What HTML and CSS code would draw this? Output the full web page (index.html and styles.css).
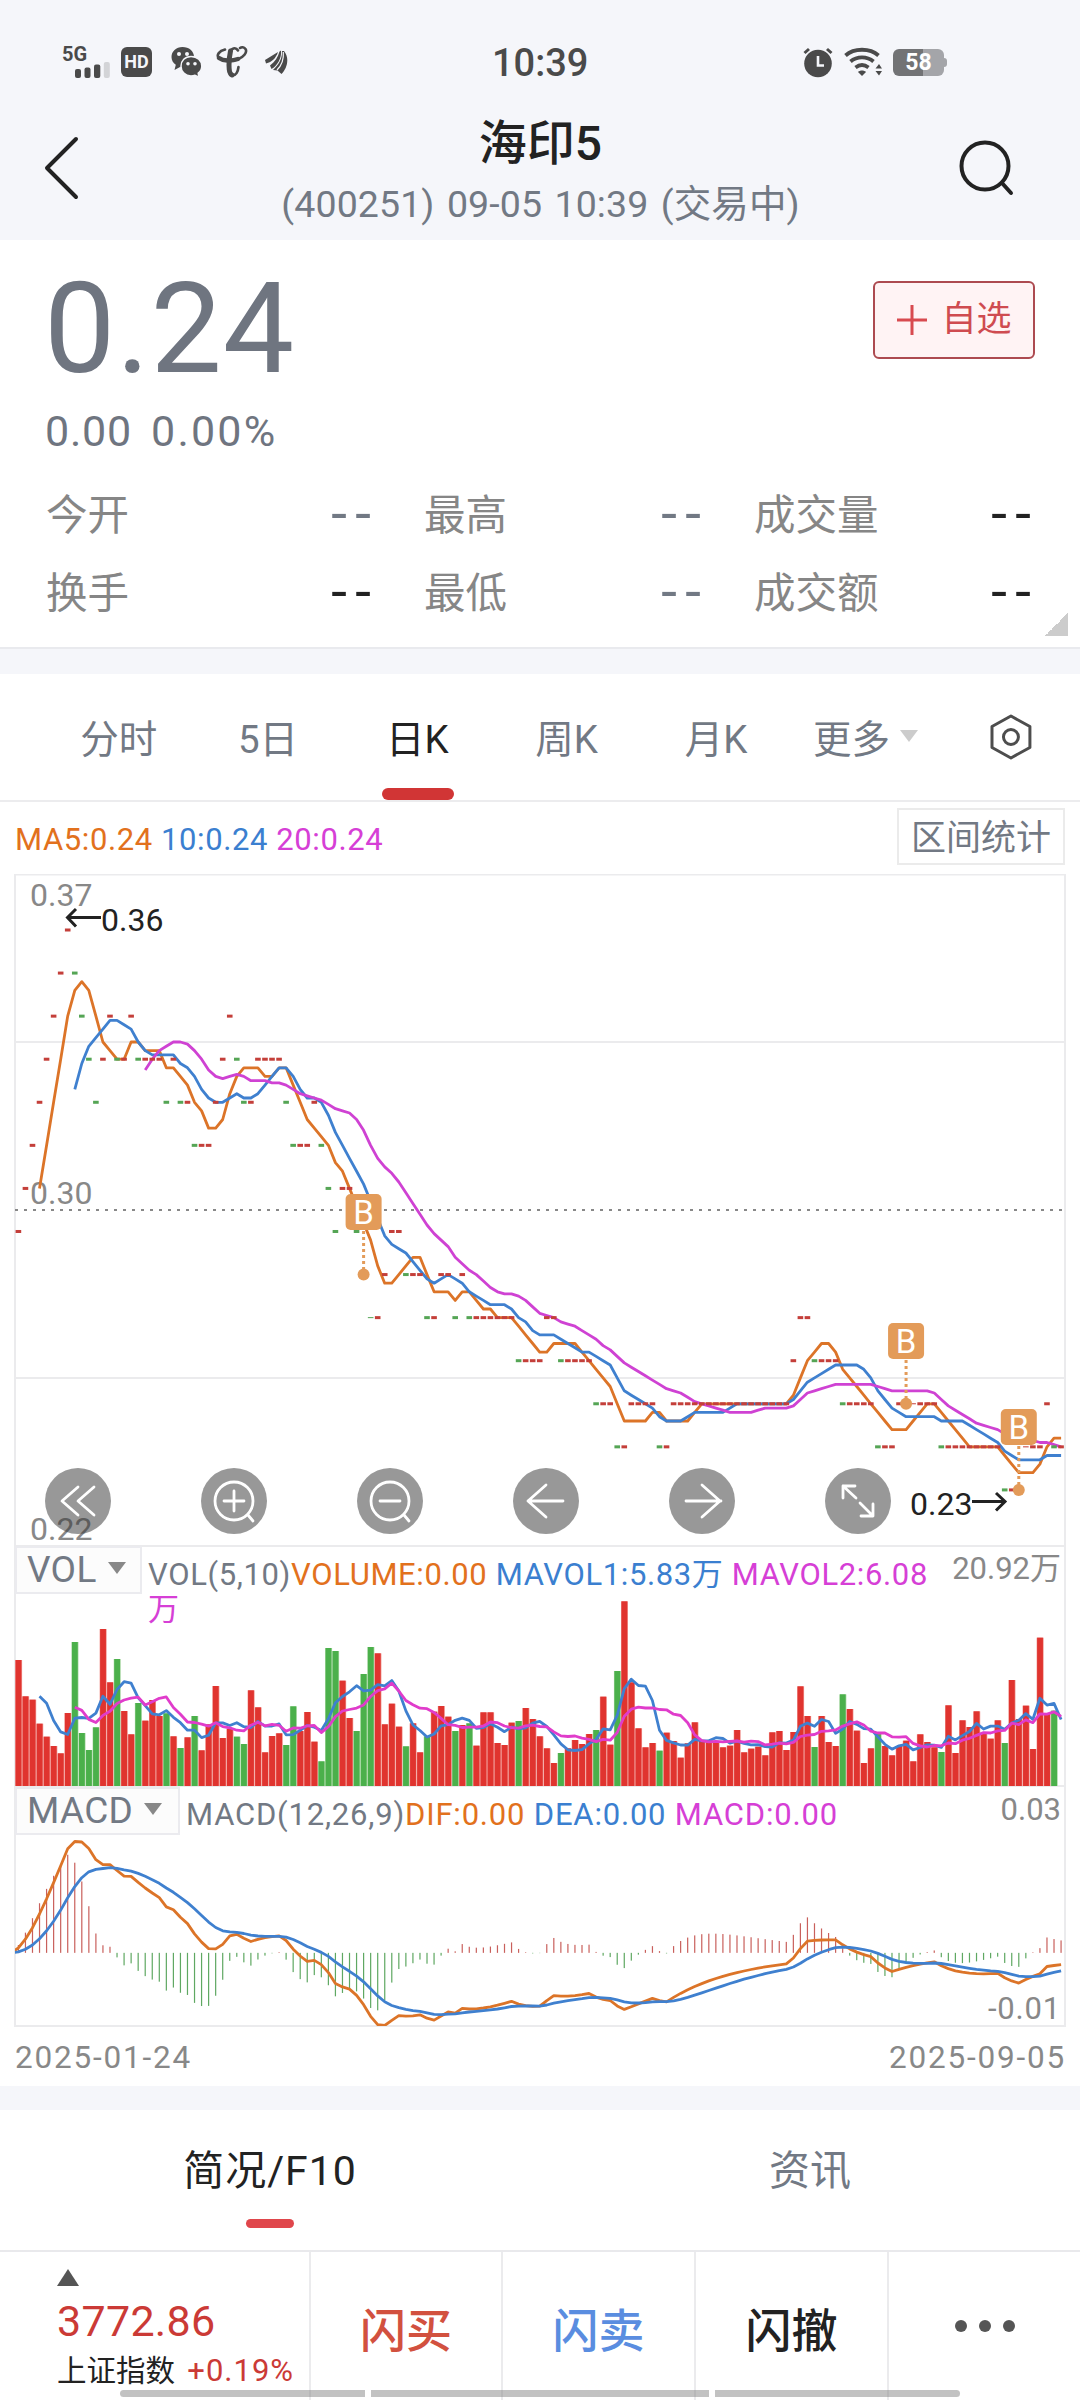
FILE: index.html
```html
<!DOCTYPE html>
<html lang="zh-CN">
<head>
    <meta charset="UTF-8">
    <title>海印5</title>
    <link rel="stylesheet" href="styles.css">
</head>
<body>
<div class="page">
    <div class="top">
        <div class="status">
            <div class="status-left">
                <svg class="signal" width="50" height="46" viewBox="61 38 50 46">
                    <text x="62" y="60" class="five-g">5G</text>
                    <g fill="#4a4a4a">
                        <rect x="75" y="68" width="6" height="9" rx="2"/>
                        <rect x="84.500" y="66.500" width="6" height="10.500" rx="2"/>
                        <rect x="94" y="63.500" width="6.300" height="13.500" rx="2"/>
                    </g>
                    <rect x="103.800" y="61" width="6" height="16" rx="2" fill="#d3d4d7"/>
                </svg>
                <span class="hd">HD</span>
                <svg class="wechat" width="32" height="32" viewBox="0 0 32 32">
                    <path d="M11.500 1C5 1 .5 5.500 .5 11c0 3.200 1.600 6 4.300 7.800L3.500 24l5.500-3c.8.2 1.700.3 2.500.3C18 21.300 23 17 23 11S18 1 11.500 1z" fill="#4a4a4a"/>
                    <circle cx="8" cy="8" r="2" fill="#f5f6fa"/><circle cx="16" cy="8" r="2" fill="#f5f6fa"/>
                    <path d="M20 10.500c-6 0-10 4.200-10 9.700s4.200 9.700 10 9.700c1.500 0 2.800-.2 4-.7l4 2-.8-4c2.200-1.700 3.600-4.200 3.600-7 0-5.500-4.500-9.700-10.800-9.700z" fill="#4a4a4a" stroke="#f5f6fa" stroke-width="1.500"/>
                    <circle cx="17" cy="17.800" r="1.800" fill="#f5f6fa"/><circle cx="24" cy="17.800" r="1.800" fill="#f5f6fa"/>
                </svg>
                <svg class="telecom" width="32" height="32" viewBox="0 0 32 32" fill="none" stroke="#4a4a4a" stroke-linecap="round">
                    <path d="M9 3.500C3 5 .5 9 2.500 11.500c3 3.500 12 4.500 19 2 6.500-2.500 10-7.500 8-10.500-1.500-2-4-2-5.500-1" stroke-width="2.600"/>
                    <path d="M3 12c4 3 12 3.500 19 1" stroke-width="4.400"/>
                    <path d="M22 4.500c-2.500-4-7-2-8 2-1.500 7-3.500 22 2 23 4 .5 6-4 6.500-8.500" stroke-width="2.600"/>
                    <path d="M14.500 5c-1.500 7-3 22 1.500 24" stroke-width="5"/>
                </svg>
                <svg class="wing" width="24" height="27" viewBox="0 0 24 27" fill="#4a4a4a">
                    <path d="M1 11 14 3C12 9 8 13 2 14.500z"/>
                    <path d="M15.500 2.500 17 1.500C18 9 13 17 7.500 20L6 16.500C11 13 14 8 15.500 2.500z"/>
                    <path d="M18 2 20 2C26 9 23 20 17.500 25L13.500 21.500 9 21C15 16 18.500 9 18 2z"/>
                    <path d="M19.300 3C20 11 17 17 13 21" fill="none" stroke="#f5f6fa" stroke-width="1.200"/>
                </svg>
            </div>
            <div class="clock">10:39</div>
            <div class="status-right">
                <svg width="30" height="32" viewBox="0 0 30 32">
                    <circle cx="15" cy="17.500" r="13.800" fill="#4a4a4a"/>
                    <path d="M1.500 7 6 3M28.500 7 24 3" stroke="#4a4a4a" stroke-width="3"/>
                    <path d="M15 10v9.500h6" fill="none" stroke="#f5f6fa" stroke-width="2.600"/>
                </svg>
                <svg width="38" height="30" viewBox="0 0 38 30" fill="none" stroke="#4a4a4a" stroke-width="3.800">
                    <path d="M1.500 8.500C10 .8 26 .8 34.500 8.500M6.500 14.500c6.500-5.500 16.500-5.500 23 0M11.500 20.500c4-3 9-3 13 0"/>
                    <path d="M18 29l-4-4c2-2 6-2 8 0z" fill="#4a4a4a" stroke="none"/>
                    <path d="M31.500 21.500 35 17l3 4.500zM31.500 24 35 28.500l3-4.500z" fill="#4a4a4a" stroke="none"/>
                </svg>
                <div class="battery">58</div>
            </div>
        </div>
        <div class="nav">
            <svg width="36" height="64" viewBox="0 0 36 64" fill="none" stroke="#222" stroke-width="4" stroke-linecap="round" stroke-linejoin="round">
                <path d="M32 3 3 32l29 29"/>
            </svg>
            <div class="nav-title">
                <h1>海印5</h1>
                <p>(400251) 09-05 10:39 (交易中)</p>
            </div>
            <svg class="search" width="56" height="58" viewBox="0 0 56 58" fill="none" stroke="#222" stroke-width="4" stroke-linecap="round">
                <circle cx="26" cy="28" r="23.500"/>
                <path d="M43 45l9 10"/>
            </svg>
        </div>
    </div>

    <div class="quote">
        <div class="quote-head">
            <div>
                <div class="price">0.24</div>
                <div class="change"><span>0.00</span><span class="percent">0.00%</span></div>
            </div>
            <div class="add">
                <svg width="32" height="32" viewBox="0 0 32 32" stroke="#d84a4f" stroke-width="3"><path d="M1 16h30M16 1v30"/></svg>
                自选
            </div>
        </div>
        <div class="stats">
            <div><span>今开</span><b>--</b></div>
            <div><span>最高</span><b>--</b></div>
            <div><span>成交量</span><b class="dark">--</b></div>
            <div><span>换手</span><b class="dark">--</b></div>
            <div><span>最低</span><b>--</b></div>
            <div><span>成交额</span><b class="dark">--</b></div>
        </div>
        <i class="corner"></i>
    </div>

    <div class="tabs">
        <div class="tab">分时</div>
        <div class="tab">5日</div>
        <div class="tab current">日K</div>
        <div class="tab">周K</div>
        <div class="tab">月K</div>
        <div class="tab">更多<i class="arrow"></i></div>
        <svg width="42" height="46" viewBox="0 0 42 46" fill="none" stroke="#4d4d4d" stroke-width="3" stroke-linejoin="round">
            <path d="M21 2 40 12.500v21L21 44 2 33.500v-21z"/>
            <circle cx="21" cy="23" r="7.500"/>
        </svg>
    </div>

    <div class="ma">
        <p><span class="orange">MA5:0.24</span> <span class="blue">10:0.24</span> <span class="pink">20:0.24</span></p>
        <div class="range">区间统计</div>
    </div>

    <div class="chart">
        <svg id="kline" class="panel-svg" width="1080" height="1154" viewBox="0 874 1080 1154"></svg>
        <div class="kpanel">
            <div class="tools">
                <svg viewBox="0 0 66 66"><path d="M33 19 17 33l16 14M49 19 33 33l16 14"/></svg>
                <svg viewBox="0 0 66 66"><circle cx="33" cy="33" r="19"/><path d="M47 47l5 6M23 33h20M33 23v20"/></svg>
                <svg viewBox="0 0 66 66"><circle cx="33" cy="33" r="19"/><path d="M47 47l5 6M23 33h20"/></svg>
                <svg viewBox="0 0 66 66"><path d="M50 33H15M33 17 15 33l18 16"/></svg>
                <svg viewBox="0 0 66 66"><path d="M17 33h35M33 17l18 16-18 16"/></svg>
                <svg viewBox="0 0 66 66"><path d="M18 30V18h12M18 18l13 12M48 36v12H36M48 48 35 35"/></svg>
            </div>
        </div>
        <div class="panel vol">
            <div class="select">VOL<i class="arrow"></i></div>
            <p class="legend"><span>VOL(5,10)</span><span class="orange">VOLUME:0.00</span> <span class="blue">MAVOL1:5.83万</span> <span class="pink">MAVOL2:6.08</span><br><span class="pink">万</span></p>
            <span class="max">20.92万</span>
        </div>
        <div class="panel macd">
            <div class="select">MACD<i class="arrow"></i></div>
            <p class="legend"><span>MACD(12,26,9)</span><span class="orange">DIF:0.00</span> <span class="blue">DEA:0.00</span> <span class="pink">MACD:0.00</span></p>
            <span class="max">0.03</span>
            <span class="min">-0.01</span>
        </div>
    </div>
    <div class="dates"><span>2025-01-24</span><span>2025-09-05</span></div>

    <div class="info-tabs">
        <div class="current">简况/F10</div>
        <div>资讯</div>
    </div>

    <div class="bottom">
        <div class="index">
            <i class="up"></i>
            <strong>3772.86</strong>
            <p>上证指数 <em>+0.19%</em></p>
        </div>
        <div class="btn buy">闪买</div>
        <div class="btn sell">闪卖</div>
        <div class="btn">闪撤</div>
        <div class="more"><i></i><i></i><i></i></div>
        <div class="home"><i></i><i></i><i></i></div>
    </div>
</div>
<script src="chart.js"></script>
</body>
</html>
```
FILE: styles.css
```css
*{
    margin: 0;
    padding: 0;
    box-sizing: border-box;
}
body {
    width: 1080px;
    font-family: Roboto, "Noto Sans CJK SC", sans-serif;
    color: #222;
    background-color: #f5f6fa;
}
svg {
    display: block;
}
i, em {
    font-style: normal;
}
.page {
    height: 2400px;
    overflow: hidden;
}
.orange { color: #e2711d; }
.blue { color: #3b7fd0; }
.pink { color: #d63fd6; }

/* status bar */
.top {
    height: 240px;
}
.status {
    height: 110px;
    padding: 14px 133px 0 61px;
    display: grid;
    grid-template-columns: 1fr auto 1fr;
    align-items: center;
}
.status-left, .status-right {
    display: flex;
    align-items: center;
}
.status-left {
    width: 431px;
}
.five-g {
    font-size: 20px;
    font-weight: 700;
    fill: #4a4a4a;
}
.hd {
    width: 31px;
    height: 30px;
    margin: 0 19px 0 10px;
    border-radius: 6px;
    background-color: #4a4a4a;
    color: #f5f6fa;
    font-size: 18px;
    font-weight: 700;
    line-height: 30px;
    text-align: center;
}
.telecom {
    margin: 0 16px 0 13px;
}
.clock {
    width: 94px;
    font-size: 38px;
    font-weight: 500;
    line-height: 46px;
    padding-top: 1px;
    color: #4a4a4a;
}
.status-right {
    width: 361px;
    justify-content: flex-end;
    gap: 11px;
}
.battery {
    width: 51px;
    height: 27px;
    margin-right: 3px;
    border-radius: 6px;
    background: linear-gradient(to right, #727375 30px, #a4a5a9 30px);
    color: #fff;
    font-size: 23px;
    font-weight: 700;
    line-height: 28px;
    text-align: center;
    position: relative;
}
.battery::after {
    content: "";
    width: 3px;
    height: 9px;
    border-radius: 0 3px 3px 0;
    background-color: #a4a5a9;
    position: absolute;
    right: -3px;
    top: 9px;
}

/* title */
.nav {
    height: 130px;
    padding: 0 65px 0 44px;
    display: flex;
    justify-content: space-between;
}
.nav > svg {
    margin-top: 26px;
}
.nav > .search {
    margin-top: 28px;
}
.nav-title {
    margin-left: 42px;
    text-align: center;
}
.nav h1 {
    font-size: 48px;
    font-weight: 500;
    line-height: 67px;
}
.nav p {
    font-size: 37.500px;
    line-height: 54px;
    color: #727984;
    letter-spacing: .1px;
    word-spacing: 3px;
}

/* quote */
.quote {
    height: 409px;
    padding: 31px 45px 0 46px;
    background-color: #fff;
    border-bottom: 2px solid #e9eaee;
    position: relative;
}
.quote-head {
    height: 202px;
    display: flex;
    justify-content: space-between;
    color: #6f7580;
}
.price {
    margin-left: -2px;
    padding-top: 2px;
    font-size: 127px;
    line-height: 112px;
    letter-spacing: .8px;
}
.change {
    margin-top: 21px;
    margin-left: -1px;
    display: flex;
    gap: 19px;
    font-size: 43px;
    line-height: 50px;
    letter-spacing: .8px;
}
.percent {
    letter-spacing: 2.200px;
}
.add {
    width: 162px;
    height: 78px;
    margin-top: 10px;
    display: flex;
    align-items: center;
    justify-content: center;
    gap: 13px;
    border: 2px solid #ad4a50;
    border-radius: 6px;
    background-color: #fff3f4;
    color: #cf4b50;
    font-size: 35px;
    line-height: 70px;
}
.stats {
    display: grid;
    grid-template-columns: 325px 277px 277px;
    column-gap: 53px;
    grid-auto-rows: 78px;
}
.stats div {
    display: flex;
    justify-content: space-between;
    align-items: center;
    color: #868686;
    font-size: 41.500px;
}
.stats b {
    font-family: "Open Sans", sans-serif;
    font-size: 56px;
    font-weight: 400;
    line-height: 60px;
    letter-spacing: 6px;
    margin: -6px -7px 0 0;
    color: #727984;
}
.stats .dark {
    color: #222;
}
.corner {
    width: 23px;
    height: 23px;
    background: linear-gradient(135deg, transparent 50%, #ccc 50%);
    position: absolute;
    right: 12px;
    bottom: 11px;
}

/* period tabs */
.tabs {
    height: 128px;
    margin-top: 25px;
    padding: 0 48px 0 44px;
    display: flex;
    align-items: center;
    background-color: #fff;
    border-bottom: 2px solid #ececee;
}
.tab {
    width: 149.700px;
    height: 126px;
    padding-bottom: 2px;
    display: flex;
    align-items: center;
    justify-content: center;
    position: relative;
    color: #727984;
    font-size: 38.500px;
}
.tabs svg {
    margin: -1px 0 0 50px;
}
.tabs .current {
    color: #222;
}
.tabs .current::after {
    content: "";
    width: 72px;
    height: 12px;
    border-radius: 6px;
    background-color: #d13535;
    position: absolute;
    left: 39px;
    bottom: 0;
}
.arrow {
    border: 9px solid transparent;
    border-top: 12px solid #888;
    border-bottom: 0;
    margin-left: 11px;
}
.tab .arrow {
    border-top-color: #ccc;
    margin: 0 0 0 10px;
}
.ma {
    height: 72px;
    padding: 6px 15px 0 15px;
    display: flex;
    justify-content: space-between;
    background-color: #fff;
    font-size: 31px;
    line-height: 64px;
    letter-spacing: .6px;
}
.range {
    width: 168px;
    height: 57px;
    border: 2px solid #ebebeb;
    color: #727984;
    font-size: 35px;
    line-height: 58px;
    text-align: center;
    letter-spacing: 0;
}

/* charts */
.chart {
    position: relative;
    background-color: #fff;
}
.panel-svg {
    position: absolute;
    left: 0;
    top: 0;
}
.panel-svg .label {
    font-size: 32px;
    fill: #888;
}
.panel-svg .dark {
    fill: #222;
}
.panel-svg .mark {
    font-size: 33px;
    fill: #fff;
    text-anchor: middle;
}
.kpanel {
    height: 672px;
    padding: 594px 189px 0 45px;
}
.tools {
    position: relative;
    display: flex;
    justify-content: space-between;
}
.tools svg {
    width: 66px;
    height: 66px;
    border-radius: 33px;
    background-color: rgba(50, 50, 50, .5);
    fill: none;
    stroke: #fff;
    stroke-width: 2.800;
    stroke-linecap: round;
    stroke-linejoin: round;
}
.panel {
    position: relative;
    display: flex;
    align-items: flex-start;
    padding: 0 19px 0 15px;
    font-size: 31px;
}
.vol {
    height: 241px;
}
.macd {
    height: 241px;
}
.select {
    height: 48px;
    padding-left: 10px;
    flex: none;
    display: flex;
    align-items: center;
    width: 127px;
    border: 2px solid #ebebef;
    background-color: #fcfcfc;
    color: #727984;
    font-size: 37px;
    line-height: 48px;
    letter-spacing: .3px;
}
.macd .select {
    width: 165px;
}
.select .arrow {
    margin-top: -4px;
}
.legend {
    width: 788px;
    flex: none;
    padding: 11px 0 0 6px;
    color: #727984;
    line-height: 35px;
    letter-spacing: .63px;
    white-space: nowrap;
}
.macd .legend {
    width: 720px;
    padding: 10px 0 0 6px;
    letter-spacing: .8px;
}
.max {
    margin-left: auto;
    margin-top: 5px;
    color: #888;
    line-height: 35px;
    white-space: nowrap;
}
.min {
    position: absolute;
    right: 19px;
    bottom: 1px;
    color: #888;
    letter-spacing: .8px;
}
.dates {
    height: 58px;
    padding: 11px 14px 0 15px;
    display: flex;
    justify-content: space-between;
    background-color: #fff;
    color: #888;
    font-size: 31.500px;
    letter-spacing: 1.800px;
}

/* company info */
.info-tabs {
    height: 142px;
    margin-top: 24px;
    display: flex;
    background-color: #fff;
    border-bottom: 2px solid #e9e9ec;
    color: #727984;
    font-size: 41px;
    line-height: 123px;
    text-align: center;
}
.info-tabs div {
    width: 540px;
    position: relative;
}
.info-tabs .current {
    color: #222;
    letter-spacing: 1px;
}
.info-tabs .current::after {
    content: "";
    width: 48px;
    height: 9px;
    border-radius: 5px;
    background-color: #e0464b;
    position: absolute;
    left: 246px;
    bottom: 22px;
}

/* trade bar */
.bottom {
    height: 148px;
    display: grid;
    grid-template-columns: 311px 192px 193px 193px 191px;
    background-color: #fff;
    position: relative;
}
.bottom > div:nth-child(-n+4) {
    border-right: 2px solid #ebebed;
}
.index {
    padding: 17px 0 0 57px;
    white-space: nowrap;
}
.up {
    display: block;
    width: 0;
    border: 11px solid transparent;
    border-bottom: 17px solid #555;
    border-top: 0;
}
.index strong {
    display: block;
    margin-top: 6px;
    color: #cb3a36;
    font-size: 43px;
    font-weight: 400;
    line-height: 58px;
    letter-spacing: .3px;
}
.index p {
    font-size: 29.500px;
    line-height: 42px;
}
.index em {
    margin-left: 5px;
    color: #cb3a36;
    font-size: 31px;
    letter-spacing: 1px;
}
.btn {
    font-size: 46px;
    font-weight: 500;
    line-height: 159px;
    height: 148px;
    text-align: center;
}
.buy { color: #d2513f; }
.sell { color: #5a8de0; }
.more {
    display: flex;
    align-items: center;
    justify-content: center;
    gap: 12px;
}
.more i {
    width: 12px;
    height: 12px;
    border-radius: 6px;
    background-color: #555;
}
.home {
    width: 840px;
    height: 7px;
    display: grid;
    grid-template-columns: 245px 338px 245px;
    gap: 6px;
    position: absolute;
    left: 120px;
    bottom: 3px;
}
.home i {
    background-color: rgba(120, 120, 120, .45);
}
.home i:first-child {
    border-radius: 4px 0 0 4px;
}
.home i:last-child {
    border-radius: 0 4px 4px 0;
}
```
FILE: chart.js
```js
// 收盘价, 单位: 0.36 以下几分钱; 第一根在屏幕外, 只参与均线计算
var ticks = [8,
    7,6,5,4,3,2,1,0,1,2, 3,4,3,2,3,3,2,3,3,3, 3,4,3,4,4,5,5,5,4,3,
    2,3,4,4,3,3,3,3,4,5, 5,5,4,5,6,7,6,6,7,8, 9,9,8,7,7,8,8,8,9,9,
    8,8,9,8,9,9,9,9,9,9, 9,10,10,10,10,9,9,10,10,10, 10,10,11,11,11,12,12,11,11,11,
    11,12,12,11,11,11,11,11,11,11, 11,11,11,11,11,11,11,11,11,11, 10,9,9,10,10,10,10,11,11,11,
    11,11,12,12,12,11,11,11,11,11, 11,12,12,12,12,12,12,12,12,12, 13,13,13,12,12,12,11,12,12];
// 成交量柱高 (1/3 px)
var vols = [252,
    378,269,259,187,148,120,98,219,432,159, 108,176,471,311,381,225,155,249,196,258, 210,218,149,114,146,210,107,185,300,144,
    172,148,126,287,236,101,150,158,123,239, 165,222,133,74,414,405,316,204,165,336, 417,398,185,247,178,119,188,101,149,223,
    240,208,165,183,188,121,221,221,129,123, 190,195,234,201,149,113,69,99,113,138, 126,156,168,268,124,345,554,311,173,116,
    129,106,160,135,85,128,191,138,135,133, 116,121,168,101,112,118,92,161,165,108, 162,299,210,117,210,132,120,275,231,166,
    69,113,158,120,92,120,136,74,155,132, 116,102,242,99,197,177,224,158,142,197, 129,318,201,241,111,445,216,226,0];
var green = [8,9,10,11,14,17,21,23,25,31,32,38,39,43,44,45,48,49,50,55,58,62,64,71,77,82,85,91,113,117,122,131,140,147];
var thin = [50,127,143];
var RED = "#e0342f", GREEN = "#4bb04b";
var html = "";

function X(i) { return 18.4 + i * 7.045; }
function Y(t) { return 930 + t * 43.07; }
function isGreen(i) { return green.indexOf(i) > -1; }

function average(list, n) {
    var out = [];
    for (var i = 0; i < list.length; i++) {
        if (i < n - 1) { out.push(null); continue; }
        var sum = 0;
        for (var j = 0; j < n; j++) sum += list[i - j];
        out.push(sum / n);
    }
    return out;
}
function ema(list, n) {
    var out = [list[0]];
    for (var i = 1; i < list.length; i++) {
        out.push((list[i] * 2 + out[i - 1] * (n - 1)) / (n + 1));
    }
    return out;
}
function line(list, color, fy) {
    var pts = [];
    for (var i = 0; i < list.length; i++) {
        if (list[i] !== null) pts.push(X(i - 1).toFixed(1) + "," + fy(list[i]).toFixed(1));
    }
    html += '<polyline clip-path="url(#frame)" fill="none" stroke="' + color + '" stroke-width="2.8" stroke-linejoin="round" points="' + pts.join(" ") + '"/>';
}
function rect(x, y, w, h, color) {
    html += '<rect x="' + x + '" y="' + y + '" width="' + w + '" height="' + h + '" fill="' + color + '"/>';
}
function text(x, y, cls, s) {
    html += '<text x="' + x + '" y="' + y + '" class="' + cls + '">' + s + '</text>';
}
function path(d, color, w, extra) {
    html += '<path d="' + d + '" fill="none" stroke="' + color + '" stroke-width="' + w + '" ' + (extra || "") + '/>';
}

html += '<clipPath id="frame"><rect x="15" y="874" width="1050" height="1152"/></clipPath>';
// 边框和网格
path("M15 874.5H1065M15 1042H1065M15 1378H1065M15 1546H1065M15 1786H1065M14 2026H1066M15 874V2026M1065 874V2026", "#ebebed", 2);
text(30, 906, "label", "0.37");
text(30, 1204, "label", "0.30");
text(30, 1540, "label", "0.22");
path("M15 1210H1065", "#888", 2, 'stroke-dasharray="3 6"');

// K线
line(average(ticks, 5), "#dc7428", Y);
line(average(ticks, 10), "#3f80cf", Y);
line(average(ticks, 20), "#cf42d3", Y);
for (var i = 0; i < ticks.length - 1; i++) {
    var h = thin.indexOf(i) > -1 ? 1 : 3;
    rect(X(i) - 2.8, Y(ticks[i + 1]) - h / 2, 5.6, h, isGreen(i) ? "#55a555" : "#c43f3a");
}
path("M101 917.5H68M76 909l-8.500 8.500 8.500 9", "#222", 3);
text(101, 931, "label dark", "0.36");
path("M972 1501.500h33M996 1493l9 8.500-9 9", "#222", 3);
text(910, 1515, "label dark", "0.23");

// 买点
var marks = [[49, 1194], [126, 1323], [142, 1409]];
for (var m = 0; m < marks.length; m++) {
    var mx = X(marks[m][0]), my = marks[m][1], dot = Y(ticks[marks[m][0] + 1]);
    path("M" + mx + " " + (my + 37) + "V" + dot, "#e39b59", 3, 'stroke-dasharray="3"');
    html += '<rect x="' + (mx - 18) + '" y="' + my + '" width="36" height="36" rx="5" fill="#e39b59"/>';
    html += '<circle cx="' + mx + '" cy="' + dot + '" r="6" fill="#e39b59"/>';
    text(mx, my + 30, "mark", "B");
}

// 成交量
for (i = 0; i < vols.length - 1; i++) {
    var vh = vols[i + 1] / 3;
    rect(X(i) - 3.3, 1786 - vh, 7, vh, isGreen(i) ? "#a9d8a4" : "#f0948f");
    rect(X(i) - 2.8, 1786 - vh, 5.8, vh, isGreen(i) ? GREEN : RED);
}
function volY(v) { return 1786 - v / 3; }
line(average(vols, 5), "#3f80cf", volY);
line(average(vols, 10), "#e03ccb", volY);

// MACD
var prices = ticks.map(function (t) { return 0.36 - t / 100; });
var fast = ema(prices, 12), slow = ema(prices, 26);
var dif = fast.map(function (v, k) { return v - slow[k]; });
var dea = ema(dif, 9);
var difMax = Math.max.apply(null, dif), difMin = Math.min.apply(null, dif);
function macdY(v) { return 1841.5 + (difMax - v) / (difMax - difMin) * 184; }
for (i = 0; i < dif.length - 1; i++) {
    var bar = 2 * (dif[i + 1] - dea[i + 1]);
    var y0 = macdY(0), y1 = macdY(bar);
    rect(X(i) - .6, Math.min(y0, y1), 1.2, Math.abs(y1 - y0), bar > 0 ? "#c9605c" : "#5fa862");
}
line(dif, "#dc7428", macdY);
line(dea, "#3f80cf", macdY);

document.getElementById("kline").innerHTML = html;
```
